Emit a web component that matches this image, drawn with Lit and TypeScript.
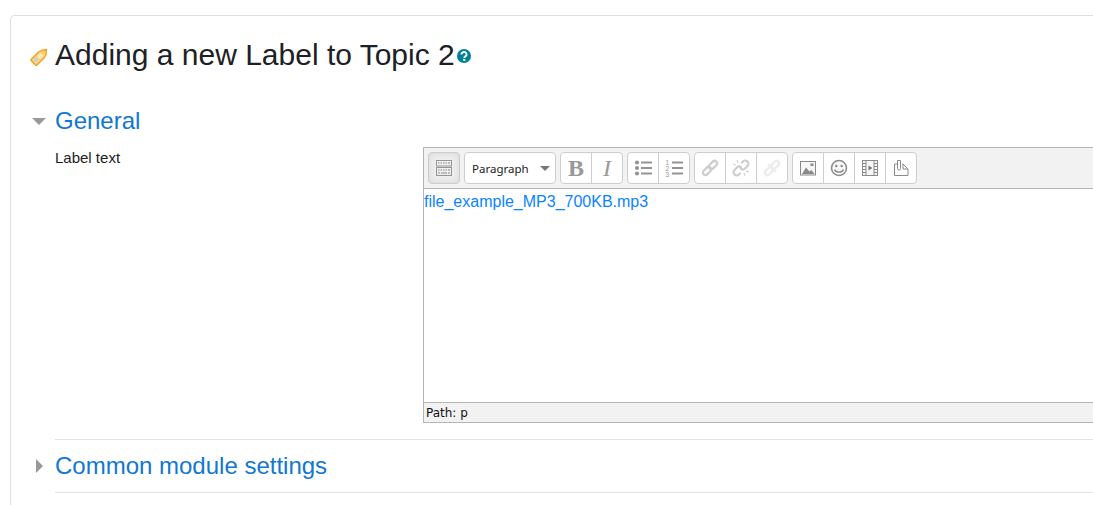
import { LitElement, html, css, svg } from "lit";
import { customElement } from "lit/decorators.js";

const G = "#949494";
const I = "#8a8a8a";
const chain = (c: string, w: number) => svg`<g fill="none" stroke="${c}" stroke-width="${w}" transform="rotate(-45 9 9)"><rect x="0" y="6.500" width="9.500" height="5" rx="2.500"/><rect x="8.500" y="6.500" width="9.500" height="5" rx="2.500"/></g>`;
const icons: Record<string, unknown> = {
  kb: svg`<g fill="#efefef" stroke="#969696"><rect x="1.500" y="1.500" width="15" height="5.500"/><rect x="1.500" y="8.500" width="15" height="8"/></g><path d="M3 4h1.500M5.500 4H7M8 4h1.500M10.500 4H12M13 4h2M3 11h1.500M5.500 11H7M8 11h1.500M10.500 11H12M13 11h2M3 14h2M6 14h6M13 14h2" stroke="#8a8a8a" stroke-width="1.200"/>`,
  ul: svg`<g fill="${G}"><circle cx="3" cy="3.500" r="2.100"/><circle cx="3" cy="9" r="2.100"/><circle cx="3" cy="14.500" r="2.100"/><rect x="7" y="2.500" width="11" height="2"/><rect x="7" y="8" width="11" height="2"/><rect x="7" y="13.500" width="11" height="2"/></g>`,
  ol: svg`<g fill="${G}" font-family="Liberation Sans" font-size="6.500"><text x="0.500" y="5.500">1</text><text x="0.500" y="11.500">2</text><text x="0.500" y="17.500">3</text><rect x="7" y="2.500" width="11" height="2"/><rect x="7" y="8" width="11" height="2"/><rect x="7" y="13.500" width="11" height="2"/></g>`,
  link: chain("#cdcdcd", 2.200),
  unlink: svg`<g fill="none" stroke="#cdcdcd" stroke-width="2.200" stroke-linecap="round"><path d="M10 3.500l1-1a3 3 0 0 1 4.500 4.500l-2.500 2.500a3 3 0 0 1-4 .3"/><path d="M8 14.500l-1 1a3 3 0 0 1-4.500-4.500l2.500-2.500a3 3 0 0 1 4-.3"/></g><path d="M5 1l1 3M1 5l3 1M13 17l-1-3M17 13l-3-1" stroke="#cdcdcd" stroke-width="1"/>`,
  anchor: svg`${chain("#ececec", 2.400)}<path d="M5 5l8 8" stroke="#ececec" stroke-width="2"/>`,
  image: svg`<rect x="1.500" y="2.500" width="15" height="13.500" fill="#f6f6f6" stroke="${I}"/><path d="M3 15l4-6.500 3.500 4 2-1.500 3 4z" fill="${I}"/><rect x="11.500" y="4.500" width="3" height="2.500" fill="${I}"/>`,
  smile: svg`<circle cx="9" cy="9" r="7.500" fill="#f8f8f8" stroke="${I}" stroke-width="1.500"/><circle cx="6.300" cy="7" r="1.200" fill="${I}"/><circle cx="11.700" cy="7" r="1.200" fill="${I}"/><path d="M4.500 10.500c1 3.500 8 3.500 9 0" fill="none" stroke="${I}" stroke-width="1.400"/>`,
  video: svg`<rect x="1.500" y="1.500" width="15" height="15" fill="#f8f8f8" stroke="${I}"/><path d="M5 1.500v15M13 1.500v15M1.500 4.500H5M1.500 7.500H5M1.500 10.500H5M1.500 13.500H5M13 4.500h3.500M13 7.500h3.500M13 10.500h3.500M13 13.500h3.500" stroke="${I}"/><path d="M7.500 6.500l4 2.500-4 2.500z" fill="#777"/>`,
  file: svg`<g fill="none" stroke="${I}"><path d="M6 5H2.500V16.500H16V10L11 5H10"/><path d="M11 5V10H16"/><path d="M5.500 9.500V1.500H8.500V9.500a1.500 1.500 0 0 1-3 0"/></g>`,
};

const ico = (name: string) =>
  html`<svg class="ico" viewBox="0 0 18 18" width="18" height="18">${icons[name]}</svg>`;

const btn = (name: string) => html`<span class="btn">${ico(name)}</span>`;

@customElement("app-root")
export class AppRoot extends LitElement {
  static styles = css`
    :host {
      display: block;
      width: 1093px;
      height: 505px;
      overflow: hidden;
      background: #fff;
      font-family: "Liberation Sans", Arial, sans-serif;
      font-size: 14px;
      color: #1d2125;
    }
    .card {
      margin: 15px -20px 0 10px;
      height: 520px;
      box-sizing: border-box;
      border: 1px solid #dfdfdf;
      border-radius: 4px;
      padding: 0 0 0 44px;
    }
    .head {
      height: 79px;
      display: flex;
      align-items: center;
      position: relative;
    }
    .tag {
      position: absolute;
      left: -25px;
      top: 32px;
    }
    h2 {
      margin: -2px 0 0 0;
      font-size: 30px;
      font-weight: 400;
      line-height: 36px;
      color: #1d2125;
    }
    .help {
      margin: 1px 0 0 2px;
      display: block;
    }
    .section {
      display: flex;
      align-items: center;
      position: relative;
      font-size: 24px;
      color: #1177d1;
      line-height: 28px;
    }
    .tri {
      position: absolute;
    }
    .tri.down {
      left: -23px;
      top: 11px;
      width: 0;
      height: 0;
      border-left: 7px solid transparent;
      border-right: 7px solid transparent;
      border-top: 7px solid #999;
    }
    .tri.right {
      left: -19px;
      top: 7px;
      width: 0;
      height: 0;
      border-top: 7px solid transparent;
      border-bottom: 7px solid transparent;
      border-left: 7px solid #999;
    }
    .gen {
      margin-top: 12px;
    }
    .row {
      display: flex;
      margin-top: 12px;
    }
    .label {
      width: 368px;
      flex: none;
      font-size: 15px;
      line-height: 20px;
      margin-top: 1px;
    }
    .editor {
      flex: 1;
      height: 276px;
      box-sizing: border-box;
      border: 1px solid #b4b4b4;
      display: flex;
      flex-direction: column;
    }
    .toolbar {
      height: 41px;
      flex: none;
      box-sizing: border-box;
      background: #f2f2f2;
      border-bottom: 1px solid #b4b4b4;
      display: flex;
      align-items: center;
      gap: 4px;
      padding: 0 0 0 4px;
    }
    .group {
      display: flex;
      height: 32px;
      box-sizing: border-box;
      background: #fff;
      border: 1px solid #cdcdcd;
      border-radius: 4px;
    }
    .btn {
      width: 30px;
      display: flex;
      align-items: center;
      justify-content: center;
      border-left: 1px solid #cdcdcd;
    }
    .btn:first-child {
      border-left: 0;
    }
    .ico {
      display: block;
    }
    .active {
      background: #eeeeee;
      box-shadow: inset 0 0 6px #d2d2d2;
    }
    .select {
      width: 92px;
      box-sizing: border-box;
      font-size: 11.500px;
      color: #222;
      display: flex;
      align-items: center;
      justify-content: space-between;
      padding: 0 3px 0 7px;
      font-family: "Noto Sans", "Open Sans", sans-serif;
    }
    .caret {
      width: 0;
      height: 0;
      border-left: 5px solid transparent;
      border-right: 5px solid transparent;
      border-top: 5px solid #777;
      margin-right: 2px;
    }
    .glyph {
      font-family: "Liberation Serif", serif;
      font-size: 24px;
      color: #999;
      line-height: 1;
    }
    .bold {
      font-weight: 700;
    }
    .ital {
      font-style: italic;
    }
    .body {
      flex: 1;
      font-size: 16px;
      line-height: 24px;
      padding: 1px 0 0;
      color: #0a84ff;
    }
    .path {
      height: 20px;
      flex: none;
      box-sizing: border-box;
      background: #f2f2f2;
      border-top: 1px solid #b4b4b4;
      padding: 0 0 0 2px;
      font-size: 12px;
      line-height: 20px;
      font-family: "DejaVu Sans", sans-serif;
      color: #111;
    }
    .rule {
      height: 1px;
      background: #e3e3e3;
    }
    .r1 {
      margin-top: 16px;
    }
    .common {
      margin-top: 12px;
      margin-bottom: 12px;
    }
  `;

  render() {
    return html`
      <div class="card">
        <div class="head">
          <svg class="tag" width="18" height="18" viewBox="0 0 18 18">
            <path d="M1 11.500l7.500-7.500 3-1.500 5-1-.5 5.500-1.500 2.500-7.500 7.500a1 1 0 0 1-1.500 0l-4.500-4.500a1 1 0 0 1 0-1z" fill="#f9d27a" stroke="#f0a020" stroke-width="1.300" stroke-linejoin="round"/>
            <path d="M7 8.500l3 3 3.500-3.500-3-3z" fill="#fde9b8"/>
            <circle cx="6" cy="11.500" r="2" fill="#b8d6ee"/>
          </svg>
          <h2>Adding a new Label to Topic 2</h2>
          <svg class="help" width="14" height="14" viewBox="0 0 14 14">
            <circle cx="7" cy="7" r="7" fill="#008196"/>
            <path d="M4.400 5.400a2.600 2.400 0 1 1 4 2c-.9.600-1.100.9-1.100 1.600" fill="none" stroke="#fff" stroke-width="1.900"/>
            <rect x="6.200" y="9.900" width="2.100" height="2" fill="#fff"/>
          </svg>
        </div>
        <div class="section gen"><span class="tri down"></span>General</div>
        <div class="row">
          <div class="label">Label text</div>
          <div class="editor">
            <div class="toolbar">
              <div class="group active">${btn("kb")}</div>
              <div class="group select">Paragraph<span class="caret"></span></div>
              <div class="group">
                <span class="btn"><span class="glyph bold">B</span></span>
                <span class="btn"><span class="glyph ital">I</span></span>
              </div>
              <div class="group">${btn("ul")}${btn("ol")}</div>
              <div class="group">${btn("link")}${btn("unlink")}${btn("anchor")}</div>
              <div class="group">${btn("image")}${btn("smile")}${btn("video")}${btn("file")}</div>
            </div>
            <div class="body">file_example_MP3_700KB.mp3</div>
            <div class="path">Path: p</div>
          </div>
        </div>
        <div class="rule r1"></div>
        <div class="section common"><span class="tri right"></span>Common module settings</div>
        <div class="rule"></div>
      </div>
    `;
  }
}
